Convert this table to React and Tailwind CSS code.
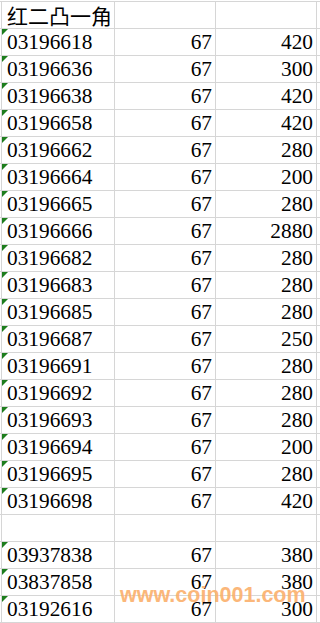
import React from "react";

const rows = [
  ["红二凸一角", "", "", "header"],
  ["03196618", "67", "420"],
  ["03196636", "67", "300"],
  ["03196638", "67", "420"],
  ["03196658", "67", "420"],
  ["03196662", "67", "280"],
  ["03196664", "67", "200"],
  ["03196665", "67", "280"],
  ["03196666", "67", "2880"],
  ["03196682", "67", "280"],
  ["03196683", "67", "280"],
  ["03196685", "67", "280"],
  ["03196687", "67", "250"],
  ["03196691", "67", "280"],
  ["03196692", "67", "280"],
  ["03196693", "67", "280"],
  ["03196694", "67", "200"],
  ["03196695", "67", "280"],
  ["03196698", "67", "420"],
  ["", "", "", "empty"],
  ["03937838", "67", "380"],
  ["03837858", "67", "380"],
  ["03192616", "67", "300"],
];

function Tri() {
  return (
    <svg className="absolute left-0 top-0" width="6" height="6" viewBox="0 0 6 6">
      <polygon points="0,0 6,0 0,6" fill="#1d7d1d" />
    </svg>
  );
}

export default function App() {
  return (
    <div className="relative w-[320px] h-[623px] overflow-hidden bg-white pt-[1px]">
      {rows.map((r, i) => {
        const isHeader = r[3] === "header";
        const isEmpty = r[3] === "empty";
        const last = i === rows.length - 1;
        return (
          <div
            key={i}
            className={
              "flex h-[27px] pl-[1px] border-t border-[#d6d6d6] text-black leading-[26px] " +
              (last ? "border-b h-[28px]" : "")
            }
          >
            <div className="relative w-[113px] shrink-0 border-l border-[#d6d6d6] pl-[5px] whitespace-nowrap">
              {isHeader ? (
                <span className="text-[21px] font-['Noto_Sans_CJK_SC',sans-serif]">{r[0]}</span>
              ) : isEmpty ? null : (
                <>
                  <Tri />
                  <span className="text-[21.33px] font-['Liberation_Serif',serif]">{r[0]}</span>
                </>
              )}
            </div>
            <div className="w-[101px] shrink-0 border-l border-[#d6d6d6] pr-[3px] text-right text-[21.33px] font-['Liberation_Serif',serif]">
              {r[1]}
            </div>
            <div className="w-[101px] shrink-0 border-l border-[#d6d6d6] pr-[3px] text-right text-[21.33px] font-['Liberation_Serif',serif]">
              {r[2]}
            </div>
            <div className="flex-1 border-l border-[#d6d6d6]" />
          </div>
        );
      })}
      <div className="absolute left-[120px] top-[585px] text-[21.5px] leading-none font-bold font-['Liberation_Sans',sans-serif] text-[#fbb06c] opacity-90 whitespace-nowrap">
        www.coin001.com
      </div>
    </div>
  );
}
